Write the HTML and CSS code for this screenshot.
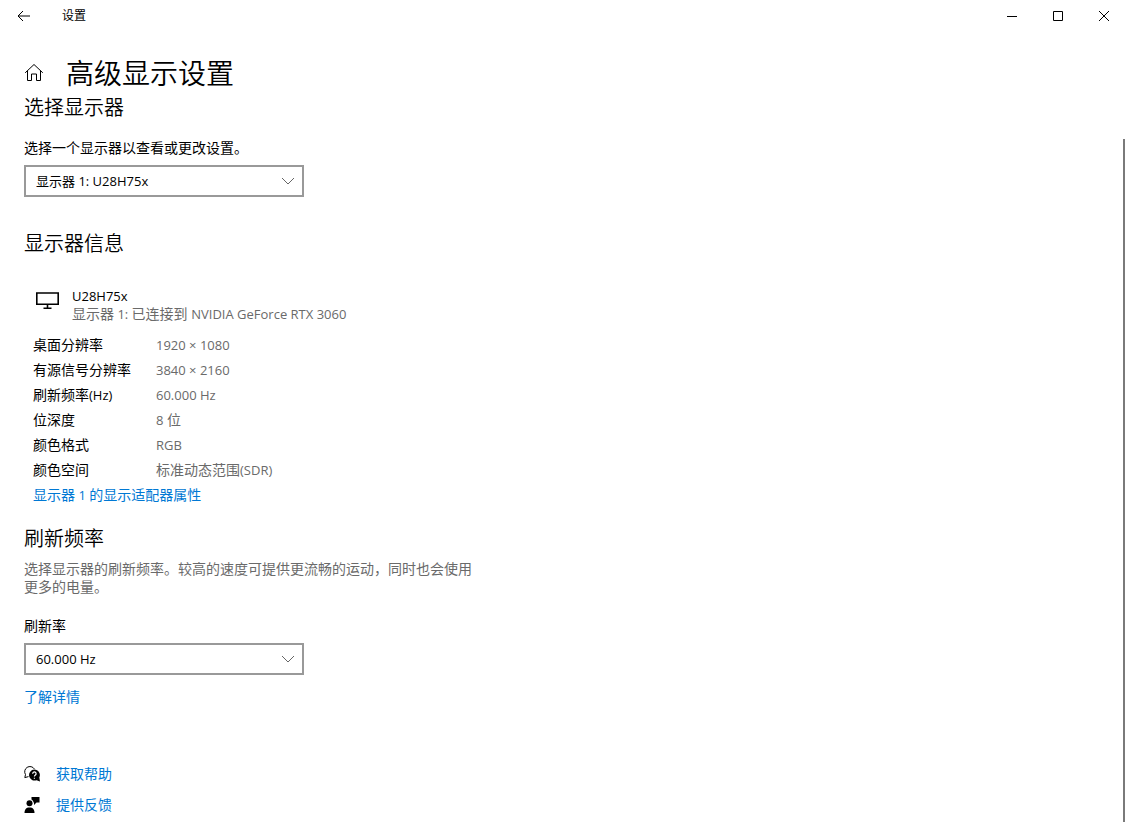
FILE: index.html
```html
<!DOCTYPE html>
<html lang="zh-CN">
<head>
  <meta charset="UTF-8">
  <meta name="viewport" content="width=device-width, initial-scale=1">
  <title>设置</title>
  <link rel="stylesheet" href="styles.css">
</head>
<body>
  <div class="titlebar">
    <button class="back" aria-label="返回">
      <svg width="14" height="14" viewBox="0 0 14 14"><path d="M1 7H13M6 2L1 7L6 12"/></svg>
    </button>
    <span class="app-name">设置</span>
    <div class="window-buttons">
      <button aria-label="最小化"><svg width="10" height="10" viewBox="0 0 10 10"><path d="M0 5.5H10"/></svg></button>
      <button aria-label="最大化"><svg width="10" height="10" viewBox="0 0 10 10"><path d="M.5 .5H9.5V9.5H.5Z"/></svg></button>
      <button aria-label="关闭"><svg width="10" height="10" viewBox="0 0 10 10"><path d="M0 0L10 10M10 0L0 10"/></svg></button>
    </div>
  </div>

  <header class="page-header">
    <a href="#" class="home" aria-label="主页">
      <svg width="20" height="20" viewBox="0 0 20 20"><path d="M1.2 10.8L10 2.5L18.8 10.8M3.5 8.8V18.5H7.5V12H12.5V18.5H16.5V8.8"/></svg>
    </a>
    <h1>高级显示设置</h1>
  </header>

  <main>
    <section>
      <h2>选择显示器</h2>
      <div class="field">
        <label for="display">选择一个显示器以查看或更改设置。</label>
        <div class="dropdown">
          <select id="display">
            <option>显示器 1: U28H75x</option>
          </select>
          <svg width="14" height="8" viewBox="0 0 14 8"><path d="M1 1L7 7L13 1"/></svg>
        </div>
      </div>
    </section>

    <section class="info">
      <h2>显示器信息</h2>
      <div class="device">
        <svg width="24" height="20" viewBox="0 0 24 20"><path d="M1.8 2H23.2V13.2H1.8ZM12.5 13V17M8.5 17.2H16.5"/></svg>
        <div>
          <div class="en">U28H75x</div>
          <div class="gray">显示器<span class="en"> 1: </span>已连接到 <span class="en">NVIDIA GeForce RTX 3060</span></div>
        </div>
      </div>
      <table>
        <tr><th>桌面分辨率</th><td class="en">1920 × 1080</td></tr>
        <tr><th>有源信号分辨率</th><td class="en">3840 × 2160</td></tr>
        <tr><th>刷新频率<span class="en">(Hz)</span></th><td class="en">60.000 Hz</td></tr>
        <tr><th>位深度</th><td><span class="en">8</span> 位</td></tr>
        <tr><th>颜色格式</th><td class="en">RGB</td></tr>
        <tr><th>颜色空间</th><td>标准动态范围<span class="en">(SDR)</span></td></tr>
      </table>
      <a href="#" class="adapter">显示器<span class="en"> 1 </span>的显示适配器属性</a>
    </section>

    <section class="refresh">
      <h2>刷新频率</h2>
      <p class="gray">选择显示器的刷新频率。较高的速度可提供更流畅的运动，同时也会使用更多的电量。</p>
      <div class="field">
        <label for="rate">刷新率</label>
        <div class="dropdown">
          <select id="rate">
            <option>60.000 Hz</option>
          </select>
          <svg width="14" height="8" viewBox="0 0 14 8"><path d="M1 1L7 7L13 1"/></svg>
        </div>
      </div>
      <a href="#" class="more">了解详情</a>
    </section>

    <div class="support">
      <a href="#">
        <svg width="16" height="16" viewBox="0 0 16 16">
          <path class="line" d="M4.5 10.6L.8 11.6L1.5 8.6A5 5 0 1 1 10.4 3"/>
          <path d="M10.3 3.6A5.5 5.5 0 0 1 15.3 11.6L16 15.6L12.6 14.2A5.5 5.5 0 1 1 10.3 3.6Z"/>
          <path class="mark" d="M8.7 7.8A1.7 1.7 0 1 1 11.4 9C10.7 9.5 10.4 9.7 10.4 10.6M10.4 11.7V12.8"/>
        </svg>
        获取帮助
      </a>
      <a href="#">
        <svg width="16" height="16" viewBox="0 0 16 16">
          <circle cx="5.5" cy="6.3" r="3"/>
          <path d="M.5 16C.5 12.5 2 10.5 5.5 10.5S10.5 12.5 10.5 16Z"/>
          <path d="M7.5 0H15.5V5.5H12.5L10 8V5.5H9.5C9.4 4 8.6 3 7.5 2.5Z"/>
        </svg>
        提供反馈
      </a>
    </div>
  </main>

  <div class="scroll-thumb"></div>
</body>
</html>
```

FILE: styles.css
```css
* {
  box-sizing: border-box;
}
body {
  margin: 0;
  background: #fff;
  color: #000;
  font-family: "Open Sans", "Noto Sans CJK SC", sans-serif;
  font-size: 14px;
  line-height: 18px;
}
h1, h2, p {
  margin: 0;
  font-weight: normal;
}
a {
  color: #0078d4;
  text-decoration: none;
}
button {
  border: none;
  background: none;
  padding: 0;
  display: flex;
  align-items: center;
  justify-content: center;
}
svg {
  display: block;
  flex: none;
  fill: none;
  stroke: #000;
}
/* latin text and digits run a bit wide next to the chinese */
.en {
  font-size: 13px;
}
.gray {
  color: #6a6a6a;
}

.titlebar {
  display: flex;
  height: 32px;
  align-items: center;
}
.back {
  width: 48px;
  height: 32px;
}
.app-name {
  margin-left: 14px;
  font-size: 12px;
}
.window-buttons {
  display: flex;
  margin-left: auto;
}
.window-buttons button {
  width: 46px;
  height: 32px;
}

.page-header {
  display: flex;
  align-items: center;
  gap: 22px;
  padding: 20px 24px 0;
}
h1, h2 {
  font-family: "Noto Sans CJK SC DemiLight", "Noto Sans CJK SC", sans-serif;
  font-weight: 350;
}
h1 {
  font-size: 28px;
  line-height: 40px;
}

main {
  padding: 1px 24px 0;
}
h2 {
  font-size: 20px;
  line-height: 28px;
}
.field {
  margin-top: 18px;
}
.field label {
  display: block;
  margin-bottom: 8px;
}
.dropdown {
  position: relative;
  width: 280px;
}
.dropdown select {
  appearance: none;
  display: block;
  width: 100%;
  height: 32px;
  padding: 0 30px 0 10px;
  border: 2px solid #999;
  border-radius: 0;
  background: #fff;
  color: #000;
  font-family: inherit;
  font-size: 13px;
}
.dropdown svg {
  position: absolute;
  right: 9px;
  top: 12px;
  stroke: #666;
  pointer-events: none;
}

.info {
  margin-top: 32px;
}
.device {
  display: flex;
  gap: 13px;
  margin: 30px 0 9px 11px;
}
.device svg {
  margin-top: 4px;
  stroke-width: 1.6;
}
table {
  border-collapse: collapse;
  margin-left: 9px;
}
th, td {
  padding: 0;
  height: 25px;
  font-weight: normal;
  text-align: left;
}
th {
  width: 123px;
}
td {
  color: #6a6a6a;
}
.adapter {
  display: block;
  margin-left: 9px;
  line-height: 25px;
}

.refresh {
  margin-top: 16px;
}
.refresh p {
  max-width: 456px;
  margin-top: 8px;
}
.refresh .field {
  margin-top: 21px;
}
.more {
  display: inline-block;
  margin-top: 13px;
}

.support {
  margin-top: 52px;
}
.support a {
  display: flex;
  align-items: center;
  gap: 16px;
  line-height: 31px;
}
.support svg {
  fill: #000;
  stroke: none;
}
.support .line {
  fill: none;
  stroke: #000;
}
.support .mark {
  fill: none;
  stroke: #fff;
  stroke-width: 1.2;
}

.scroll-thumb {
  position: absolute;
  top: 139px;
  right: 2px;
  bottom: 16px;
  width: 2px;
  background: #7a7a7a;
}
```
